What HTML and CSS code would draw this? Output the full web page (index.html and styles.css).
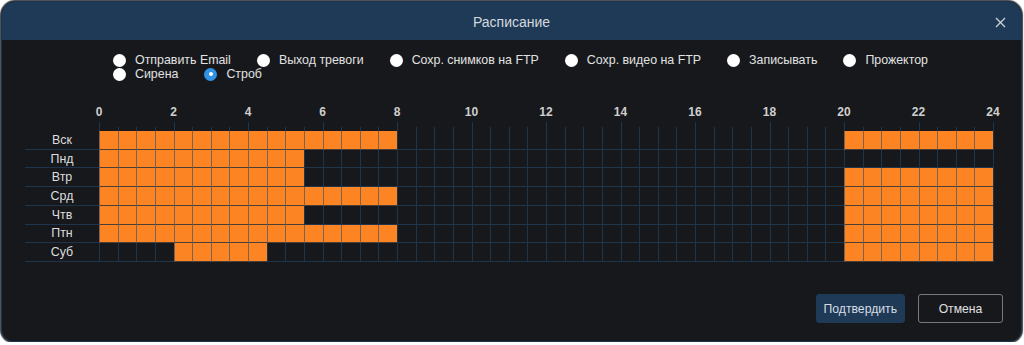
FILE: index.html
```html
<!DOCTYPE html>
<html lang="ru">
  <head>
    <meta charset="UTF-8" />
    <meta name="viewport" content="width=device-width, initial-scale=1.0" />
    <title>Расписание</title>
    <link rel="stylesheet" href="styles.css">
  </head>
  <body>
    <div class="dialog">
      <div class="dialog-head">
        <h3 class="dialog-title">Расписание</h3>
        <button class="close-btn" aria-label="close">
          <svg width="11" height="11" viewBox="0 0 11 11">
            <path d="M1 1 L10 10 M10 1 L1 10" stroke="#c9ced4" stroke-width="1.4" fill="none" />
          </svg>
        </button>
      </div>

      <div class="dialog-body">
        <div class="actions">
          <label class="radio"><span class="dot"></span>Отправить Email</label>
          <label class="radio"><span class="dot"></span>Выход тревоги</label>
          <label class="radio"><span class="dot"></span>Сохр. снимков на FTP</label>
          <label class="radio"><span class="dot"></span>Сохр. видео на FTP</label>
          <label class="radio"><span class="dot"></span>Записывать</label>
          <label class="radio"><span class="dot"></span>Прожектор</label>
          <label class="radio"><span class="dot"></span>Сирена</label>
          <label class="radio"><span class="dot checked"></span>Строб</label>
        </div>

        <div class="schedule">
          <div></div>
          <div class="hours">
            <span>0</span><span>2</span><span>4</span><span>6</span><span>8</span>
            <span>10</span><span>12</span><span>14</span><span>16</span><span>18</span>
            <span>20</span><span>22</span><span>24</span>
          </div>
          <div></div>
          <div class="ticks"></div>
          <div class="days">
            <div class="day">Вск</div>
            <div class="day">Пнд</div>
            <div class="day">Втр</div>
            <div class="day">Срд</div>
            <div class="day">Чтв</div>
            <div class="day">Птн</div>
            <div class="day">Суб</div>
          </div>
          <div class="grid"></div>
        </div>

        <div class="footer">
          <button class="btn btn-primary">Подтвердить</button>
          <button class="btn">Отмена</button>
        </div>
      </div>
    </div>
    <script src="script.js"></script>
  </body>
</html>
```

FILE: styles.css
```css
* {
  margin: 0;
  padding: 0;
  box-sizing: border-box;
}
body {
  background: #fff;
  font-family: "Liberation Sans", Arial, sans-serif;
  font-size: 12px;
  color: #dcdcdc;
}

.dialog {
  margin: 1px 0 0 1px;
  width: 1021px;
  height: 341px;
  background: #17181c;
  border: 1px solid #1c3550;
  border-radius: 14px 14px 12px 12px;
  box-shadow: 0 0 1px 1px rgba(0, 0, 0, 0.75);
  overflow: hidden;
}

.dialog-head {
  height: 38px;
  background: #1f3a57;
  display: flex;
  justify-content: center;
  align-items: center;
  position: relative;
}
.dialog-title {
  font-size: 14px;
  font-weight: normal;
  color: #d3d9df;
  margin-top: 1px;
}
.close-btn {
  position: absolute;
  right: 15px;
  top: 15px;
  width: 11px;
  height: 11px;
  background: none;
  border: none;
  display: flex;
  cursor: pointer;
}

.dialog-body {
  padding: 13px 18px 0 23px;
}

.actions {
  display: flex;
  flex-wrap: wrap;
  width: 860px;
  margin-left: 88px;
}
.radio {
  display: flex;
  align-items: center;
  height: 14px;
  line-height: 14px;
  margin-right: 26px;
  font-size: 12.4px;
  color: #e2e2e2;
}
.dot {
  width: 13px;
  height: 13px;
  border-radius: 50%;
  background: #fff;
  margin-right: 9px;
  display: flex;
  justify-content: center;
  align-items: center;
}
.dot.checked {
  background: #2f93e6;
}
.dot.checked::after {
  content: "";
  width: 4px;
  height: 4px;
  border-radius: 50%;
  background: #fff;
}

.schedule {
  display: grid;
  grid-template-columns: 74px 895px;
  margin-top: 24px;
}
.hours {
  display: flex;
  width: 968.5px;
  margin-left: -37.25px;
  height: 14px;
  line-height: 14px;
  margin-bottom: 3px;
}
.hours span {
  width: 74.5px;
  text-align: center;
  font-weight: bold;
  color: #cfcfcf;
}
.ticks {
  display: flex;
  justify-content: space-between;
  align-items: flex-end;
  height: 9px;
}
.ticks span {
  width: 1px;
  height: 4px;
  background: #1e344b;
}
.ticks span.long {
  height: 9px;
}

.days {
  display: grid;
  grid-template-rows: repeat(7, 1fr);
  height: 131px;
}
.day {
  display: flex;
  justify-content: center;
  align-items: center;
  border-bottom: 1px solid #1e344b;
  font-size: 12.4px;
  color: #dedede;
}

.grid {
  display: grid;
  grid-template-columns: repeat(48, 1fr);
  grid-template-rows: repeat(7, 1fr);
  height: 131px;
  border-right: 1px solid #1e344b;
}
.cell {
  border-left: 1px solid #1e344b;
  border-bottom: 1px solid #1e344b;
}
.cell.on {
  background: #fd8423;
  border-left-color: #7a6352;
  border-bottom-color: #4a3f38;
}

.footer {
  display: flex;
  justify-content: flex-end;
  gap: 13px;
  margin-top: 32px;
}
.btn {
  min-width: 85px;
  height: 29px;
  padding: 0 7px;
  border: 1px solid #77797c;
  border-radius: 3px;
  background: transparent;
  color: #e0e0e0;
  font-family: inherit;
  font-size: 12.2px;
  cursor: pointer;
}
.btn-primary {
  background: #1f3a57;
  border-color: #1f3a57;
  color: #d6dde5;
}
```

FILE: script.js
```js
// half-hour slots [from, to) for each day, Sun..Sat
let schedule = [
  [[0, 16], [40, 48]],
  [[0, 11]],
  [[0, 11], [40, 48]],
  [[0, 16], [40, 48]],
  [[0, 11], [40, 48]],
  [[0, 16], [40, 48]],
  [[4, 9], [40, 48]],
];

let ticks = document.querySelector(".ticks");
for (let i = 0; i <= 48; i++) {
  let t = document.createElement("span");
  if (i % 4 == 0) t.className = "long";
  ticks.appendChild(t);
}

let grid = document.querySelector(".grid");
schedule.forEach(function (ranges) {
  for (let i = 0; i < 48; i++) {
    let cell = document.createElement("div");
    cell.className = "cell";
    ranges.forEach(function (r) {
      if (i >= r[0] && i < r[1]) cell.classList.add("on");
    });
    grid.appendChild(cell);
  }
});
```
